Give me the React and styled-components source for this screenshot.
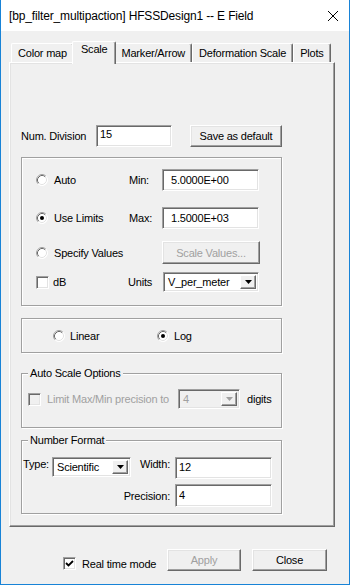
import React from 'react'
import styled, { createGlobalStyle } from 'styled-components'

const GlobalStyle = createGlobalStyle`
  html, body {
    margin: 0;
    padding: 0;
    background: #f0f0f0;
  }
  body {
    font-family: "Liberation Sans", Arial, sans-serif;
    font-size: 11px;
    letter-spacing: -0.2px;
    color: #000;
  }
  * {
    box-sizing: border-box;
  }
`

const Window = styled.div`
  width: 350px;
  height: 585px;
  border: 1px solid #1883d7;
  border-top: none;
  background: #f0f0f0;
  display: flex;
  flex-direction: column;
  overflow: hidden;
`

const TitleBar = styled.div`
  height: 31px;
  flex: none;
  background: #fff;
  display: flex;
  align-items: center;
  padding-left: 8px;
  font-size: 12px;
  letter-spacing: -0.15px;
`

const CloseButton = styled.div`
  margin-left: auto;
  width: 32px;
  height: 31px;
  display: flex;
  align-items: center;
  justify-content: center;
`

const Body = styled.div`
  padding: 10px 0 0 8px;
`

const TabStrip = styled.div`
  display: flex;
  align-items: flex-end;
  height: 21px;
  padding-left: 2px;
  position: relative;
  z-index: 1;
`

const Tab = styled.div`
  height: ${p => (p.$active ? '23px' : '19px')};
  margin: ${p => (p.$active ? '0 -2px -2px' : '0')};
  padding: ${p => (p.$active ? '1px 8px 0 8px' : '0 6px')};
  line-height: ${p => (p.$active ? '13px' : '18px')};
  background: #f0f0f0;
  border-top: 1px solid #fff;
  border-left: 1px solid #fff;
  border-right: 1px solid #696969;
  box-shadow: inset -1px 0 #a0a0a0;
  border-radius: 2px 2px 0 0;
  white-space: nowrap;
  position: relative;
  z-index: ${p => (p.$active ? 2 : 1)};
`

const Panel = styled.div`
  width: 326px;
  height: 465px;
  border: 1px solid;
  border-color: #fff #696969 #696969 #fff;
  box-shadow: inset -1px -1px #a0a0a0, inset 1px 1px #e3e3e3;
  padding: 62px 0 0 11px;
`

const Row = styled.div`
  display: flex;
  align-items: center;
  height: ${p => p.$h || 22}px;
  margin-top: ${p => p.$mt || 0}px;
`

const Label = styled.span`
  width: ${p => (p.$w ? `${p.$w}px` : 'auto')};
  flex: none;
  white-space: nowrap;
  color: ${p => (p.$disabled ? '#a0a0a0' : '#000')};
  margin-left: ${p => p.$ml || 0}px;
`

const TextBox = styled.input`
  width: ${p => p.$w}px;
  height: ${p => p.$h || 22}px;
  flex: none;
  margin: 0;
  border: 1px solid;
  border-color: #a0a0a0 #fff #fff #a0a0a0;
  box-shadow: inset 1px 1px #696969, inset -1px -1px #e3e3e3;
  background: #fff;
  font: inherit;
  letter-spacing: inherit;
  color: #000;
  padding: ${p => p.$pad || '0 0 0 3px'};
  outline: none;
`

const Button = styled.button`
  width: ${p => p.$w}px;
  height: ${p => p.$h || 22}px;
  flex: none;
  margin: 0 0 0 ${p => p.$ml || 0}px;
  padding: 0;
  background: #f0f0f0;
  border: 1px solid;
  border-color: #fff #696969 #696969 #fff;
  box-shadow: inset -1px -1px #a0a0a0, inset 1px 1px #e3e3e3;
  font: inherit;
  letter-spacing: inherit;
  color: #000;
  &:disabled {
    color: #a0a0a0;
  }
`

const Group = styled.div`
  position: relative;
  width: 261px;
  height: ${p => p.$h}px;
  margin-top: ${p => p.$mt}px;
  border: 1px solid #a0a0a0;
  box-shadow: inset 1px 1px #fff, 1px 1px #fff;
  padding: ${p => p.$pad};
`

const Legend = styled.span`
  position: absolute;
  top: -8px;
  left: 6px;
  padding: 0 2px;
  background: #f0f0f0;
  line-height: 14px;
  white-space: nowrap;
`

const Choice = styled.div`
  display: flex;
  align-items: center;
  gap: ${p => p.$gap || 6}px;
  width: ${p => p.$w}px;
  flex: none;
`

const CheckBox = styled.span`
  width: 13px;
  height: 13px;
  flex: none;
  display: inline-flex;
  align-items: center;
  justify-content: center;
  border: 1px solid;
  border-color: #a0a0a0 #fff #fff #a0a0a0;
  box-shadow: inset 1px 1px #696969, inset -1px -1px #e3e3e3;
  background: ${p => (p.$disabled ? '#f0f0f0' : '#fff')};
`

const Combo = styled.div`
  width: ${p => p.$w}px;
  height: ${p => p.$h || 20}px;
  flex: none;
  display: flex;
  border: 1px solid;
  border-color: #a0a0a0 #fff #fff #a0a0a0;
  box-shadow: inset 1px 1px #696969, inset -1px -1px #e3e3e3;
  background: ${p => (p.$disabled ? '#f0f0f0' : '#fff')};
  padding: 2px;
`

const ComboText = styled.span`
  flex: 1;
  display: flex;
  align-items: center;
  padding-left: 2px;
  white-space: nowrap;
  color: ${p => (p.$disabled ? '#a0a0a0' : '#000')};
`

const DropButton = styled.span`
  width: 16px;
  flex: none;
  display: flex;
  align-items: center;
  justify-content: center;
  background: #f0f0f0;
  border: 1px solid;
  border-color: #fff #696969 #696969 #fff;
  box-shadow: inset -1px -1px #a0a0a0;
`

const FormatGrid = styled.div`
  display: grid;
  grid-template-columns: 29px 79px 44px 97px;
  grid-template-rows: 22px 23px;
  row-gap: 5px;
`

const GridLabel = styled.span`
  grid-column: ${p => p.$col};
  justify-self: ${p => p.$justify || 'start'};
  align-self: ${p => p.$align || 'start'};
  padding-right: ${p => p.$pr || 0}px;
  padding-top: ${p => p.$pt || 0}px;
  white-space: nowrap;
`

const BottomBar = styled.div`
  display: flex;
  align-items: center;
  height: 22px;
  margin-top: 22px;
  padding-left: 54px;
`

const CheckGroup = styled.div`
  display: flex;
  align-items: center;
  width: 104px;
  padding-top: 7px;
`

const Radio = ({ checked }) => (
  <svg width="12" height="12" viewBox="0 0 12 12" style={{ flex: 'none' }}>
    <circle cx="6" cy="6" r="5.5" fill="#fff" />
    <path d="M2.11 9.89 A5.5 5.5 0 0 1 9.89 2.11" stroke="#a0a0a0" fill="none" />
    <path d="M9.89 2.11 A5.5 5.5 0 0 1 2.11 9.89" stroke="#fff" fill="none" />
    <path d="M2.82 9.18 A4.5 4.5 0 0 1 9.18 2.82" stroke="#696969" fill="none" />
    <path d="M9.18 2.82 A4.5 4.5 0 0 1 2.82 9.18" stroke="#e3e3e3" fill="none" />
    {checked && <circle cx="6" cy="6" r="2" fill="#000" />}
  </svg>
)

const Tick = () => (
  <svg width="9" height="9" viewBox="0 0 9 9">
    <path d="M1 4 L3.5 6.5 L8 2" stroke="#000" strokeWidth="1.8" fill="none" />
  </svg>
)

const Arrow = ({ disabled }) => (
  <svg width="7" height="4" viewBox="0 0 7 4">
    <path d="M0 0 H7 L3.5 4 Z" fill={disabled ? '#a0a0a0' : '#000'} />
  </svg>
)

const Select = ({ value, w, h, disabled }) => (
  <Combo $w={w} $h={h} $disabled={disabled}>
    <ComboText $disabled={disabled}>{value}</ComboText>
    <DropButton>
      <Arrow disabled={disabled} />
    </DropButton>
  </Combo>
)

const tabs = ['Color map', 'Scale', 'Marker/Arrow', 'Deformation Scale', 'Plots']

export default function App() {
  return (
    <Window>
      <GlobalStyle />
      <TitleBar>
        [bp_filter_multipaction] HFSSDesign1 -- E Field
        <CloseButton>
          <svg width="10" height="10" viewBox="0 0 10 10">
            <path d="M0 0 L10 10 M10 0 L0 10" stroke="#000" strokeWidth="1" />
          </svg>
        </CloseButton>
      </TitleBar>
      <Body>
        <TabStrip>
          {tabs.map(t => (
            <Tab key={t} $active={t === 'Scale'}>{t}</Tab>
          ))}
        </TabStrip>
        <Panel>
          <Row>
            <Label $w={75}>Num. Division</Label>
            <TextBox $w={76} defaultValue="15" $pad="0 0 4px 3px" readOnly />
            <Button $w={92} $ml={18}>Save as default</Button>
          </Row>

          <Group $mt={10} $h={149} $pad="11px 0 0 14px">
            <Row>
              <Choice $w={93}><Radio /><span>Auto</span></Choice>
              <Label $w={33}>Min:</Label>
              <TextBox $w={97} defaultValue="5.0000E+00" $pad="0 0 0 8px" readOnly />
            </Row>
            <Row $mt={16}>
              <Choice $w={93}><Radio checked /><span>Use Limits</span></Choice>
              <Label $w={33}>Max:</Label>
              <TextBox $w={97} defaultValue="1.5000E+03" $pad="0 0 0 8px" readOnly />
            </Row>
            <Row $mt={12} $h={23}>
              <Choice $w={126}><Radio /><span>Specify Values</span></Choice>
              <Button $w={98} $h={23} disabled>Scale Values...</Button>
            </Row>
            <Row $mt={8} $h={20}>
              <Choice $w={92} $gap={4}><CheckBox /><span>dB</span></Choice>
              <Label $w={35}>Units</Label>
              <Select w={96} value="V_per_meter" />
            </Row>
          </Group>

          <Group $mt={12} $h={35} $pad="0 0 0 31px">
            <Row $h={33}>
              <Choice $w={104} $gap={5}><Radio /><span>Linear</span></Choice>
              <Choice $w={60} $gap={5}><Radio checked /><span>Log</span></Choice>
            </Row>
          </Group>

          <Group $mt={20} $h={55} $pad="15px 0 0 6px">
            <Legend>Auto Scale Options</Legend>
            <Row $h={20}>
              <CheckBox $disabled />
              <Label $w={131} $ml={6} $disabled>Limit Max/Min precision to</Label>
              <Select w={62} value="4" disabled />
              <Label $ml={7}>digits</Label>
            </Row>
          </Group>

          <Group $mt={12} $h={74} $pad="16px 0 0 1px">
            <Legend>Number Format</Legend>
            <FormatGrid>
              <GridLabel $col="1" $pt={1}>Type:</GridLabel>
              <Select w={79} value="Scientific" />
              <GridLabel $col="3" $justify="end" $pr={5} $pt={1}>Width:</GridLabel>
              <TextBox $w={97} defaultValue="12" $pad="0 0 3px 3px" readOnly />
              <GridLabel $col="1 / 4" $justify="end" $align="center" $pr={5}>Precision:</GridLabel>
              <TextBox $w={97} $h={23} defaultValue="4" $pad="0 0 2px 3px" readOnly />
            </FormatGrid>
          </Group>
        </Panel>

        <BottomBar>
          <CheckGroup>
            <CheckBox><Tick /></CheckBox>
            <Label $ml={6}>Real time mode</Label>
          </CheckGroup>
          <Button $w={74} disabled>Apply</Button>
          <Button $w={75} $ml={11}>Close</Button>
        </BottomBar>
      </Body>
    </Window>
  )
}
